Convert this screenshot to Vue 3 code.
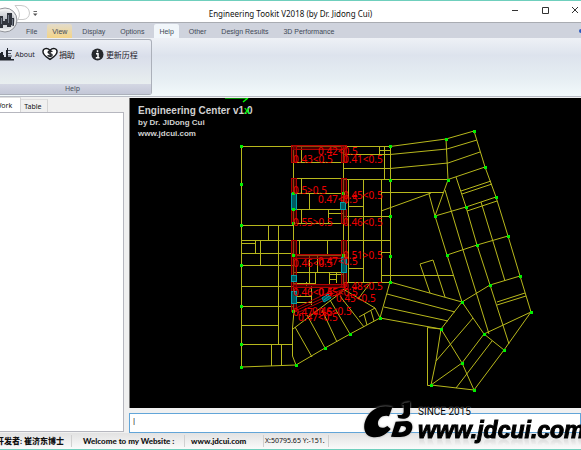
<script setup>
import { ref } from 'vue'

const tabs = ['File', 'View', 'Display', 'Options', 'Help', 'Other', 'Design Results', '3D Performance']
const active = ref('Help')
const hovered = 'View'
const command = ref('')

const walls = [
  'M241.5 146.5V367L296 365L325 348L350 334L380 318L390 282',
  'M241 146.5H390L446 139L474 131L485 167L496 197L508 236L520 276L531 312L504 350L474 390L431 385',
  'M241 225.5H293M241 240.5H390M241 253.5H293M241 265.5H293M241 286.5H293M241 306.5H293M241 325.5H278M241 344.5H292',
  'M278.5 225V344M268.5 225V240M255.5 240V253M241 243.5H255M260.5 240V265M271.5 344V366M281.5 344V366',
  'M294 311L292.5 328V356L296 365M293.5 146V311M343.5 146V286',
  'M293 162.5H343M301.5 146V162M293 178.5H343M301.5 178V193M293 193.5H343M309.5 193V209M293 209.5H343',
  'M301.5 209V223M328.5 209V223M328 213.5H343M293 223.5H343',
  'M390.5 146V282M343 154.5H390L447 149L477 140M343 168.5H390L448 163L480 152M343 179.5H448L485 167',
  'M384.5 146V180M379.5 146V154M379 150.5H390M348.5 180V282M363.5 180V282M381.5 180V282M348 206.5H363',
  'M343 216.5H390M381 192.5H443M381 211L431 193M381 252.5H390M381 275.5H454M343 282.5H390M348 268.5H363',
  'M299.5 240V255M327.5 240V255M293 255.5H343M309.5 255V283M317.5 255V272M293 272.5H343M315.5 272V285M293 283.5H315',
  'M306.5 282V286M329.5 273V285M329 274.5H343M329 279.5H337M336.5 273V283M311.5 286V305M293 296.5H311M293 302.5H311',
  'M343 289L375 308L380 318M293 329L343 291M295 327L312 357M307 315L325 348M322 310L337 342M330 300L350 334M340 296L364 327',
  'M359 317L375 308M371 282L358 299M371 311L374 321M364 314L367 325',
  'M446 139L448 180L435 216L466 207L496 197M456 177L466 207L477 245L490 285L509 344M461 191L491 181M462 194L492 184',
  'M467 211L497 201M445 190L463 250L489 334M429 194L435 216L447 255L462 302M481 202L505 281M447 255L477 245L508 236',
  'M430 293L420 264L433 260L445 297M390 282L462 302M387 294L455 312M384 307L448 321M380 318L441 329L462 302L490 285L520 276',
  'M497 302L525 293M497 305L526 296M462 302L484 334L504 350M484 334L531 312M441 329L462 363L474 390',
  'M441 329L436 361L431 385L462 363L484 334M441 329L427.5 327.5V385.5H431M436 361L473 318M456 388L492 341'
]

const nodes = [
  [241, 146], [241, 184], [241, 225], [241, 265], [241, 306], [241, 344], [241, 367], [296, 365], [325, 348],
  [350, 334], [380, 318], [390, 282], [390, 256], [390, 216], [390, 180], [390, 146], [293, 193], [343, 193],
  [293, 209], [293, 223], [293, 255], [343, 255], [293, 311], [446, 139], [474, 131], [485, 167], [448, 180],
  [496, 197], [466, 207], [435, 216], [508, 236], [477, 245], [447, 255], [490, 285], [520, 276], [462, 302],
  [531, 312], [484, 334], [504, 350], [441, 329], [462, 363], [431, 385], [474, 390]
]

const bands = [
  [293, 145, 51, 4], [291, 145, 5, 17], [341, 145, 5, 17], [291, 178, 5, 15], [341, 178, 5, 25], [341, 209, 5, 14],
  [291, 209, 5, 14], [291, 240, 5, 71], [341, 240, 5, 46], [293, 254, 52, 4], [293, 284, 52, 3]
]

const openings = [[291, 193, 5, 16], [340, 202, 5, 7], [291, 275, 5, 6], [291, 291, 5, 12], [341, 257, 5, 15]]

const ratios = [
  ['0.42<0.5', 318, 155], ['0.43<0.5', 293, 163], ['0.41<0.5', 343, 163], ['0.5>0.5', 293, 194],
  ['0.47<0.5', 318, 203], ['0.45<0.5', 343, 199], ['0.55>0.5', 293, 226], ['0.46<0.5', 343, 226],
  ['0.46<0.5', 293, 267], ['0.47<0.5', 318, 265], ['0.51>0.5', 343, 259], ['0.46<0.5', 293, 296],
  ['0.45<0.5', 318, 296], ['0.48<0.5', 343, 290], ['0.45<0.5', 336, 302], ['0.47<0.5', 293, 316],
  ['0.46<0.5', 312, 315], ['0.47<0.5', 298, 321]
]
</script>

<template>
  <div class="window">
    <header class="titlebar">
      <svg class="quick" width="40" height="21" viewBox="0 0 40 21" aria-hidden="true">
        <path d="M15 4.500H21Q29 5 29.500 12Q29 18 23 18.500H18Q22 12 15 4.500Z" fill="#fff" stroke="#c9c9c9" />
        <path d="M33.500 10.500H37" stroke="#666" />
        <path d="M33 12.500H37.500L35.200 15Z" fill="#555" />
      </svg>
      <h1>Engineering Tookit V2018 (by Dr. Jidong Cui)</h1>
      <div class="controls">
        <button aria-label="Minimize"><svg width="8" height="8"><path d="M1 4.500H7" /></svg></button>
        <button aria-label="Maximize"><svg width="8" height="8"><path d="M1.500 1.500H7.500V7.500H1.500Z" /></svg></button>
        <button aria-label="Close"><svg width="8" height="8"><path d="M1 1L7 7M7 1L1 7" /></svg></button>
      </div>
      <button class="orb" aria-label="Application menu">
        <svg width="26" height="26" viewBox="0 0 26 26">
          <defs>
            <linearGradient id="orb" x1="0" y1="0" x2="0" y2="1">
              <stop offset="0" stop-color="#f7f7f8" /><stop offset=".5" stop-color="#b8bcc4" /><stop offset="1" stop-color="#eceef1" />
            </linearGradient>
          </defs>
          <circle cx="13" cy="13" r="12" fill="url(#orb)" stroke="#92949a" />
          <circle cx="13" cy="13" r="10.500" fill="none" stroke="#f4f4f4" />
          <path d="M4 20V11H8V9H11V14H13V12H15V6H20V11H22V19L19 18V20H15V18H11V21H8V19Z" fill="#30343d" />
          <path d="M9.500 11V17M16.500 8V16M20.500 12V18" stroke="#747b88" />
        </svg>
      </button>
    </header>

    <nav class="tabs">
      <button v-for="t in tabs" :key="t" :class="{ active: t === active, hovered: t === hovered }" @click="active = t">{{ t }}</button>
      <span class="hint"></span>
    </nav>

    <section class="ribbon">
      <div class="group">
        <div class="tools">
          <button>
            <svg width="14" height="14" viewBox="0 0 14 14">
              <path d="M0 12.500V6H1V5H3V8H4V10H6V3H7V1H8V10H11V12H14V13.500H0Z" fill="#20242d" />
              <path d="M8 3.500H12M8 6.500H11M8 9H12" stroke="#4a5160" />
            </svg>About
          </button>
          <button class="donate">
            <svg width="16" height="14" viewBox="0 0 17 14">
              <path d="M8.500 12.800C4.500 10 1 8 1 4.500C1 .800 5.500 .200 8.500 3C11.500 .200 16 .800 16 4.500C16 8 12.500 10 8.500 12.800Z" fill="#fff" stroke="#17191d" stroke-width="1.500" />
              <path d="M11 4.500C9.500 3.200 6.300 3.500 6.500 5.200C6.700 6.700 10.800 6 10.800 8C10.800 9.800 7.500 9.800 6 8.300M8.600 2.500V10.500" fill="none" stroke="#17191d" stroke-width="1.400" />
            </svg>捐助
          </button>
          <button class="history">
            <svg width="13" height="13" viewBox="0 0 13 13">
              <circle cx="6.500" cy="6.500" r="6" fill="#26282c" />
              <path d="M6.500 2.300V4.200M5 5.800H7V9.500M4.800 9.800H8.500" fill="none" stroke="#fff" stroke-width="1.500" />
            </svg>更新历程
          </button>
        </div>
        <div class="caption">Help</div>
      </div>
    </section>

    <main class="workspace">
      <aside class="side">
        <div class="sheets">
          <button class="current">Work</button>
          <button>Table</button>
        </div>
        <div class="tree"></div>
      </aside>
      <section class="work">
        <div class="canvas">
          <div class="credits">
            <h2>Engineering Center v1.0</h2>
            <p>by Dr. JiDong Cui</p>
            <p>www.jdcui.com</p>
          </div>
          <svg class="plan" width="451" height="310" viewBox="130 98 451 310">
            <path d="M225 98.500H248" stroke="#008a00" />
            <path d="M243 102L248 98" stroke="#0f0" stroke-width="1.500" />
            <text x="244" y="114" class="axis">X</text>
            <g fill="none" stroke="#b8b81c">
              <path v-for="(d, i) in walls" :key="i" :d="d" />
            </g>
            <g fill="#700000" stroke="#b00000" fill-opacity=".6">
              <rect v-for="(b, i) in bands" :key="i" :x="b[0] + 0.5" :y="b[1] + 0.5" :width="b[2]" :height="b[3]" />
              <path d="M294 309L342 286M295 311L343 289M297 313L344 291" fill="none" />
            </g>
            <g fill="#005a60" stroke="#00a0aa">
              <rect v-for="(b, i) in openings" :key="i" :x="b[0] + 0.5" :y="b[1] + 0.5" :width="b[2]" :height="b[3]" />
              <path d="M322 298L328 294L331 298L324 302ZM324 300L329 296" />
            </g>
            <g fill="#00f000">
              <rect v-for="(n, i) in nodes" :key="i" :x="n[0] - 1" :y="n[1] - 1" width="3" height="3" />
            </g>
            <g class="ratios">
              <text v-for="(r, i) in ratios" :key="i" :x="r[1]" :y="r[2]">{{ r[0] }}</text>
            </g>
          </svg>
        </div>
        <input v-model="command" class="command" aria-label="Command" placeholder="|" />
      </section>
    </main>

    <footer class="status">
      <span class="author">开发者: 崔济东博士</span>
      <span class="welcome">Welcome to my Website :</span>
      <a href="#">www.jdcui.com</a>
      <span class="coords">X:50795.65 Y:-151.</span>
    </footer>

    <div class="brand">
      <svg width="50" height="39" viewBox="0 0 150 117">
        <path d="M88 19C60 10 28 20 12 48C-3 74 2 103 27 108C49 112 70 101 83 84L73 75C61 84 47 82 45 70C43 56 54 43 71 44L78 46Z" />
        <path d="M125 5L141 3V38C139 52 124 56 106 51L103 41C113 44 121 42 122 33V13L116 11Z" />
        <path fill-rule="evenodd" d="M98 62L132 60C151 62 151 82 143 94C135 108 114 110 84 107ZM114 75L106 94C117 95 127 92 129 84C130 77 125 74 114 75Z" />
      </svg>
      <div class="words">
        <span class="since">SINCE 2015</span>
        <span class="site">www.jdcui.com</span>
      </div>
    </div>
  </div>
</template>

<style>
body {
  margin: 0;
  overflow: hidden;
}
</style>

<style scoped>
* {
  box-sizing: border-box;
}
.window {
  position: relative;
  display: flex;
  flex-direction: column;
  height: 100vh;
  overflow: hidden;
  border-top: 1px solid #6fcfbd;
  border-bottom: 1px solid #6fcfbd;
  background: #f0f0f0;
  font-family: "Noto Sans", "Noto Sans CJK SC", sans-serif;
  font-size: 7px;
  color: #222;
}
button {
  display: flex;
  align-items: center;
  margin: 0;
  padding: 0;
  border: 0;
  background: none;
  font: inherit;
  color: inherit;
  white-space: nowrap;
}
.titlebar {
  position: relative;
  display: grid;
  grid-template-columns: 1fr auto 1fr;
  flex: none;
  height: 21px;
  background: #fff;
}
h1 {
  margin: 0;
  padding-top: 2px;
  font-size: 8px;
  line-height: 21px;
  font-weight: 400;
  color: #111;
}
.controls {
  display: flex;
  justify-content: flex-end;
  align-items: flex-start;
  gap: 22px;
  padding: 5px 2px 0 0;
}
.controls path {
  fill: none;
  stroke: #333;
}
.orb {
  position: absolute;
  left: -8px;
  top: 6px;
  z-index: 2;
}
.tabs {
  display: flex;
  flex: none;
  gap: 5px;
  height: 16px;
  padding: 1px 0 0 21px;
  border-top: 1px solid #a9acb2;
  background: #cfd3dd;
  font-family: "Liberation Sans", sans-serif;
  color: #3f4956;
}
.tabs button {
  padding: 0 5px;
  border-radius: 2px 2px 0 0;
}
.tabs .hovered {
  background: linear-gradient(#e3dccb, #f3d488);
}
.tabs .active {
  background: #f1f6fa;
}
.hint {
  align-self: center;
  width: 4px;
  height: 4px;
  margin: 0 -2px 0 auto;
  border-radius: 2px;
  background: #2c59c0;
}
.ribbon {
  flex: none;
  height: 59px;
  padding: 1px 0 2px;
  border-bottom: 1px solid #b9bdc6;
  background: linear-gradient(#eef1f6, #dde3ed 30%, #e6eef3 70%, #f2f9fb);
}
.group {
  display: flex;
  flex-direction: column;
  width: 152px;
  height: 56px;
  border: 1px solid #abb0ba;
  border-left: 0;
  border-radius: 0 3px 3px 0;
  background: linear-gradient(#eceff5, #d9deea 30%, #e8eeef 80%);
}
.tools {
  display: flex;
  flex: 1;
  align-items: flex-start;
  padding-top: 7px;
  color: #1c2029;
}
.tools button {
  height: 14px;
  gap: 1px;
}
.tools .donate {
  margin-left: 7px;
  font-size: 8px;
}
.tools .history {
  gap: 2px;
  margin-left: 16px;
  font-size: 8px;
}
.caption {
  height: 10px;
  padding-right: 6px;
  background: linear-gradient(#d4d7e3, #c3c7d7);
  line-height: 10px;
  text-align: center;
  color: #4b5563;
}
.workspace {
  display: flex;
  flex: 1;
  min-height: 0;
}
.side {
  display: flex;
  flex-direction: column;
  width: 129px;
  padding: 0 5px 1px 0;
}
.sheets {
  display: flex;
  height: 15px;
  align-items: flex-end;
  color: #111;
}
.sheets button {
  height: 13px;
  padding: 0 5px 0 3px;
  border-right: 1px solid #d5d5d5;
  border-top: 1px solid #dedede;
}
.sheets .current {
  height: 15px;
  margin-left: -8px;
  padding-right: 8px;
  background: #fff;
}
.tree {
  flex: 1;
  border: 1px solid #b6b7bf;
  border-left: 0;
  background: #fff;
}
.work {
  display: flex;
  flex: 1;
  flex-direction: column;
  gap: 5px;
  min-width: 0;
  padding-top: 1px;
}
.canvas {
  display: grid;
  flex: 1;
  min-height: 0;
  overflow: hidden;
  border-left: 1px solid #777;
  background: #000;
}
.credits,
.plan {
  grid-area: 1 / 1;
}
.credits {
  padding: 6px 8px;
  font-family: "Liberation Sans", sans-serif;
  font-weight: 700;
  color: #d0d0d0;
}
h2 {
  margin: 0;
  font-size: 10px;
  line-height: 13px;
}
p {
  margin: 0;
  font-size: 8px;
  line-height: 11px;
}
.axis {
  fill: #0f0;
  font: 700 9px "Liberation Sans", sans-serif;
}
.ratios {
  fill: #f00000;
  font-size: 10px;
}
.command {
  flex: none;
  width: 100%;
  height: 20px;
  padding: 0 3px 5px;
  border: 1px solid #62a5d8;
  outline: 0;
  background: #fff;
  font: 8px "Liberation Sans", sans-serif;
}
.command::placeholder {
  color: #222;
}
.status {
  display: flex;
  flex: none;
  align-items: center;
  height: 16px;
  background: linear-gradient(#e2e2e2, #fafafa);
  font-family: Lato, "Noto Sans CJK SC", sans-serif;
  font-size: 8px;
  font-weight: 900;
  line-height: 12px;
  white-space: nowrap;
  color: #111;
}
.status > * {
  flex: none;
  border-right: 1px solid #d0d0d0;
}
.author {
  width: 76px;
  margin-left: -4px;
}
.welcome {
  width: 113px;
  padding-left: 11px;
}
.status a {
  width: 79px;
  padding-left: 6px;
  color: inherit;
  text-decoration: none;
}
.coords {
  width: 65px;
  padding-left: 1px;
  font-family: "Noto Sans", sans-serif;
  font-size: 7px;
  font-weight: 400;
}
.brand {
  position: absolute;
  left: 363px;
  bottom: 6px;
  display: flex;
  align-items: flex-start;
  gap: 5px;
  color: #000;
  white-space: nowrap;
}
.brand svg {
  filter: drop-shadow(0 0 1px #aaa);
}
.words {
  display: flex;
  flex-direction: column;
  margin-top: 6px;
}
.since {
  font: 10px/10px Roboto, sans-serif;
  text-shadow: 0 0 1px #fff;
}
.site {
  font: italic 700 23px/26px "Liberation Sans", sans-serif;
  -webkit-text-stroke: 1px #000;
  -webkit-box-reflect: below -8px linear-gradient(transparent 60%, rgba(0, 0, 0, 0.12));
}
</style>
